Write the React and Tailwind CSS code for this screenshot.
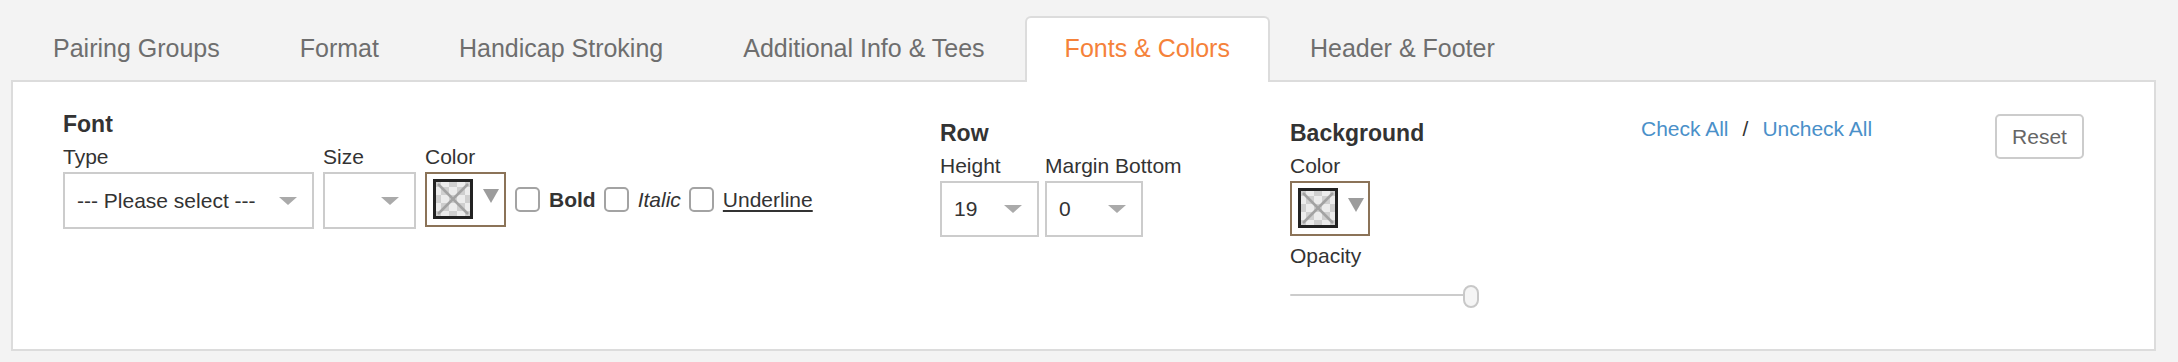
import React from "react";
import clsx from "clsx";

const tabs = [
  "Pairing Groups",
  "Format",
  "Handicap Stroking",
  "Additional Info & Tees",
  "Fonts & Colors",
  "Header & Footer",
];

function Arrow() {
  return (
    <svg width="18" height="8" viewBox="0 0 18 8">
      <polygon points="0,0 18,0 9,8" fill="#aaaaaa" />
    </svg>
  );
}

function Swatch() {
  // transparent colour: checkerboard with a cross
  const cells = [];
  for (let r = 0; r < 5; r++) {
    for (let c = 0; c < 5; c++) {
      if ((r + c) % 2 === 0) {
        cells.push(<rect key={r + "-" + c} x={c * 8} y={r * 8} width="8" height="8" fill="#cfcfcf" />);
      }
    }
  }
  return (
    <svg width="40" height="40" viewBox="0 0 40 40">
      <rect width="40" height="40" fill="#ececec" />
      {cells}
      <line x1="5" y1="5" x2="35" y2="35" stroke="#a3a3a3" strokeWidth="2.5" />
      <line x1="35" y1="5" x2="5" y2="35" stroke="#a3a3a3" strokeWidth="2.5" />
      <rect x="1.5" y="1.5" width="37" height="37" fill="none" stroke="#222222" strokeWidth="3" />
    </svg>
  );
}

function ColorPicker({ width }) {
  return (
    <div className={clsx("h-[55px] border-2 border-[#8b7358] pl-[6px] pt-[5px] flex items-start", width)}>
      <Swatch />
      <svg className="ml-[10px] mt-[10px]" width="16" height="14" viewBox="0 0 16 14">
        <polygon points="0,0 16,0 8,14" fill="#9c9c9c" />
      </svg>
    </div>
  );
}

function Select({ value, className }) {
  return (
    <div
      className={clsx(
        "border-2 border-[#cccccc] bg-white flex items-center justify-between pl-[12px] pr-[15px] text-[21px] text-[#333]",
        className
      )}
    >
      <span className="whitespace-nowrap">{value}</span>
      <Arrow />
    </div>
  );
}

function Field({ label, children, className }) {
  return (
    <div className={clsx("flex flex-col", className)}>
      <span className="text-[21px] leading-[25px] text-[#333] whitespace-nowrap">{label}</span>
      <div className="mt-[3px]">{children}</div>
    </div>
  );
}

function Checkbox({ children }) {
  return (
    <div className="flex items-center gap-[9px]">
      <span className="w-[25px] h-[25px] rounded-[5px] border-2 border-[#a3a3a3] bg-white" />
      <span className="text-[21px] leading-[25px] text-[#333]">{children}</span>
    </div>
  );
}

export default function App() {
  return (
    <div className="min-h-screen bg-[#f3f3f3] pl-[11px] pr-[22px] pt-[16px] pb-[11px] font-['Liberation_Sans',Arial,sans-serif]">
      {/* Tabs */}
      <div className="flex pl-[2px] -mb-[2px]">
        {tabs.map((t) => {
          const active = t === "Fonts & Colors";
          return (
            <div
              key={t}
              className={clsx(
                "h-[66px] px-[38px] pt-[15px] border-2 border-b-0 rounded-t-[6px] text-[25px] leading-[30px] whitespace-nowrap",
                active
                  ? "bg-white border-[#dcdcdc] text-[#f5823a] relative z-10"
                  : "border-transparent text-[#6e6e6e]"
              )}
            >
              {t}
            </div>
          );
        })}
      </div>

      {/* Panel */}
      <div className="h-[271px] border-2 border-[#dcdcdc] bg-white flex items-start pl-[50px]">
        {/* Font */}
        <div className="w-[877px] pt-[29px]">
          <h3 className="text-[23px] leading-[27px] font-bold text-[#333]">Font</h3>
          <div className="mt-[6px] flex items-start gap-[9px]">
            <Field label="Type">
              <Select value="--- Please select ---" className="w-[251px] h-[57px]" />
            </Field>
            <Field label="Size">
              <Select value="" className="w-[93px] h-[57px]" />
            </Field>
            <Field label="Color">
              <ColorPicker width="w-[81px]" />
            </Field>
            <div className="mt-[28px] h-[55px] flex items-center gap-[8px]">
              <Checkbox>
                <span className="font-bold">Bold</span>
              </Checkbox>
              <Checkbox>
                <span className="italic">Italic</span>
              </Checkbox>
              <Checkbox>
                <span className="underline underline-offset-[3px]">Underline</span>
              </Checkbox>
            </div>
          </div>
        </div>

        {/* Row */}
        <div className="w-[350px] pt-[38px]">
          <h3 className="text-[23px] leading-[27px] font-bold text-[#333]">Row</h3>
          <div className="mt-[6px] flex items-start gap-[6px]">
            <Field label="Height">
              <Select value="19" className="w-[99px] h-[56px]" />
            </Field>
            <Field label="Margin Bottom">
              <Select value="0" className="w-[98px] h-[56px]" />
            </Field>
          </div>
        </div>

        {/* Background */}
        <div className="w-[351px] pt-[38px]">
          <h3 className="text-[23px] leading-[27px] font-bold text-[#333]">Background</h3>
          <div className="mt-[6px]">
            <Field label="Color">
              <ColorPicker width="w-[80px]" />
            </Field>
          </div>
          <div className="mt-[7px] text-[21px] leading-[25px] text-[#333]">Opacity</div>
          <div className="mt-[17px] w-[189px] h-[23px] flex items-start">
            <div className="flex-1 h-[2px] mt-[9px] bg-[#cccccc] rounded-full" />
            <div className="-ml-[2px] w-[16px] h-[23px] rounded-[8px] border-2 border-[#c8c8c8] bg-[#f5f5f5]" />
          </div>
        </div>

        {/* Check all */}
        <div className="w-[354px] pt-[34px] flex items-center gap-[14px] text-[21px] leading-[25px]">
          <a href="#" className="text-[#4a90c9]">Check All</a>
          <span className="text-[#333]">/</span>
          <a href="#" className="text-[#4a90c9]">Uncheck All</a>
        </div>

        {/* Reset */}
        <div className="pt-[32px]">
          <button className="w-[89px] h-[45px] border-2 border-[#cccccc] rounded-[5px] bg-white text-[21px] text-[#666]">
            Reset
          </button>
        </div>
      </div>
    </div>
  );
}
